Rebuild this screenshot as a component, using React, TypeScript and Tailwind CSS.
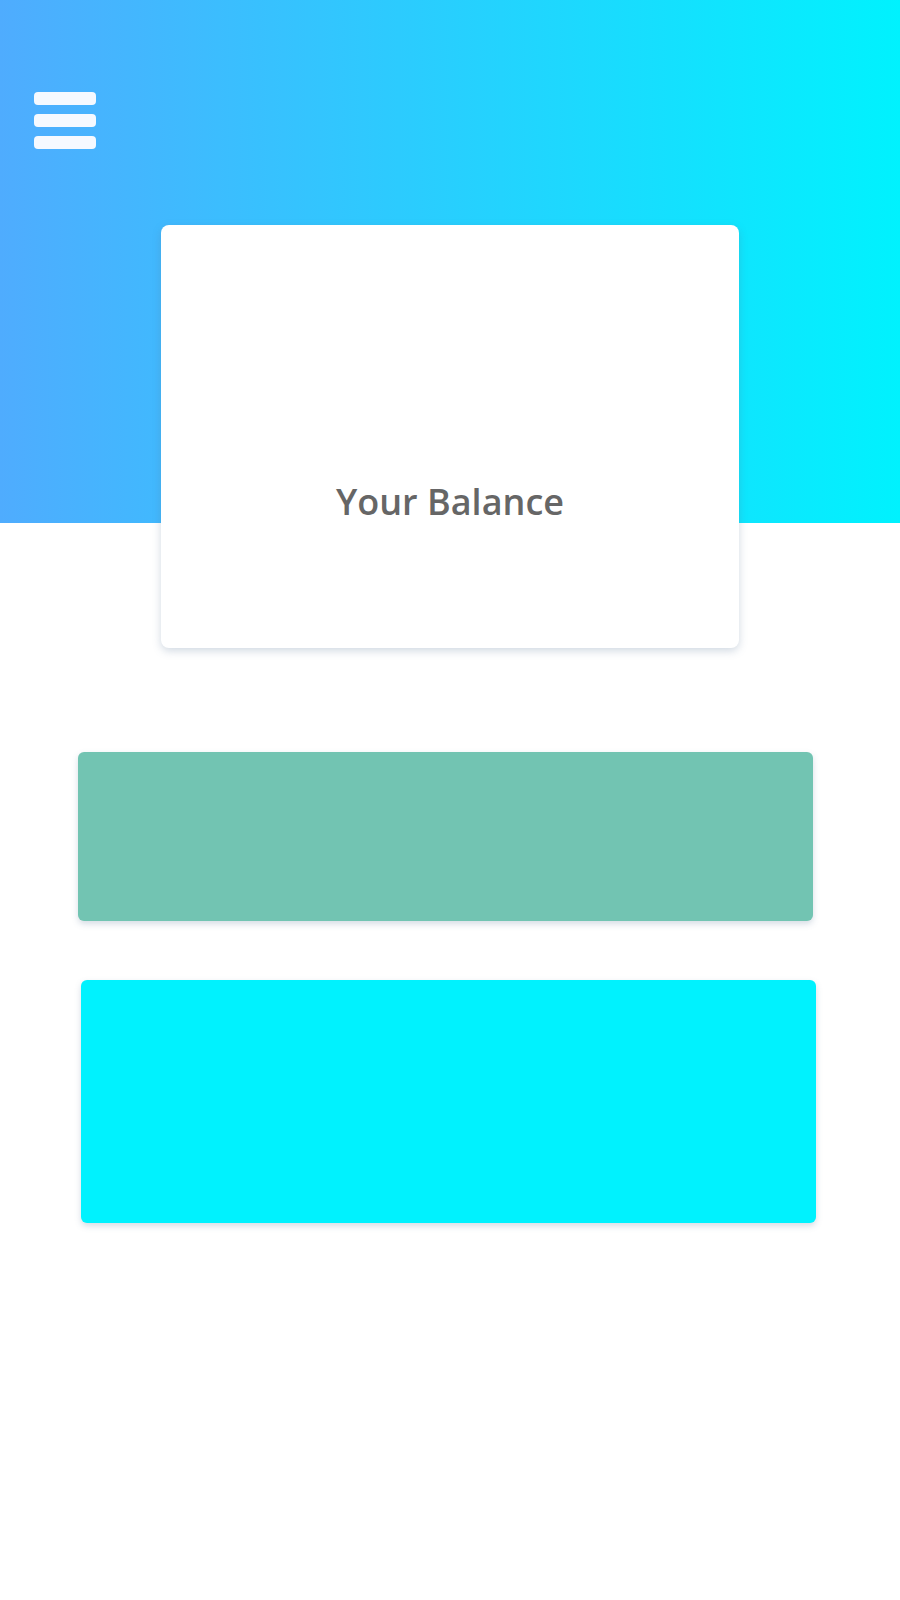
export default function App() {
  return (
    <div className="w-[900px] min-h-[1600px] bg-white" style={{ fontFamily: '"Open Sans", "Noto Sans", sans-serif' }}>
      <div className="h-[523px] bg-[linear-gradient(to_right,#4facfe,#00f2fe)] pt-[92px] pl-[34px]">
        <div className="flex w-[62px] flex-col gap-[9px]">
          <div className="h-[13px] rounded-[4px] bg-[#f5f9ff]" />
          <div className="h-[13px] rounded-[4px] bg-[#f5f9ff]" />
          <div className="h-[13px] rounded-[4px] bg-[#f5f9ff]" />
        </div>
      </div>
      <div className="relative z-10 mx-[161px] mt-[-298px] h-[423px] w-[578px] rounded-[8px] bg-white pt-[252px] text-center shadow-[0_3px_8px_rgba(90,120,150,0.28)]">
        <div className="text-[36px] font-semibold leading-[49px] text-[#666666]">Your Balance</div>
      </div>
      <div className="ml-[78px] mt-[104px] h-[169px] w-[735px] rounded-[6px] bg-[#72c4b2] shadow-[0_3px_6px_rgba(90,120,150,0.25)]" />
      <div className="ml-[81px] mt-[59px] h-[243px] w-[735px] rounded-[6px] bg-[#00f2fe] shadow-[0_3px_6px_rgba(90,120,150,0.25)]" />
    </div>
  );
}
